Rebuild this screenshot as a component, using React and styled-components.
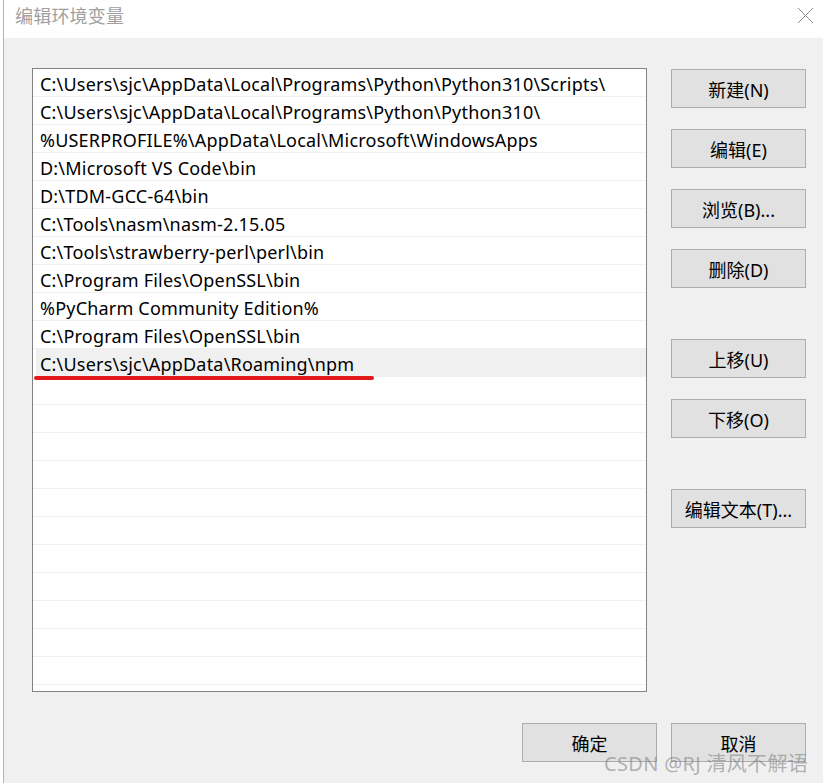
import React from "react";
import styled, { createGlobalStyle } from "styled-components";

const GlobalStyle = createGlobalStyle`
  html, body {
    margin: 0;
    padding: 0;
    background: #ffffff;
  }
  body {
    font-family: "Noto Sans", "Noto Sans CJK SC", sans-serif;
  }
`;

const Window = styled.div`
  position: relative;
  width: 820px;
  height: 783px;
  margin-left: 3px;
  border-left: 1px solid #b4b4b4;
  box-sizing: border-box;
  display: flex;
  flex-direction: column;
  overflow: hidden;
`;

const TitleBar = styled.div`
  height: 38px;
  background: #ffffff;
  display: flex;
  align-items: center;
  justify-content: space-between;
  padding: 0 9px 8px 11px;
  box-sizing: border-box;
`;

const Title = styled.div`
  font-family: "Noto Sans CJK SC", sans-serif;
  font-size: 18px;
  color: #a0a0a0;
  letter-spacing: 0.2px;
`;

const CloseButton = styled.svg`
  width: 17px;
  height: 17px;
`;

const Body = styled.div`
  flex: 1;
  background: #f0f0f0;
  display: grid;
  grid-template-columns: 615px 135px;
  grid-template-rows: 624px auto;
  column-gap: 24px;
  row-gap: 31px;
  padding: 30px 16px 0 28px;
  align-content: start;
`;

const List = styled.div`
  background: #ffffff;
  border: 1px solid #828282;
  overflow: hidden;
`;

const Row = styled.div`
  height: 28px;
  box-sizing: border-box;
  border-bottom: 1px solid #f0f0f0;
  margin-left: ${(p) => (p.$selected ? "3px" : "0")};
  padding-left: ${(p) => (p.$selected ? "4px" : "7px")};
  padding-top: 2px;
  background: ${(p) => (p.$selected ? "#f0f0f0" : "#ffffff")};
  font-size: 18px;
  letter-spacing: 0.2px;
  line-height: 27px;
  color: #000000;
  white-space: nowrap;
  position: relative;
  z-index: ${(p) => (p.$selected ? 2 : 1)};
`;

const RedMark = styled.span`
  position: absolute;
  left: -2px;
  top: 27px;
  width: 340px;
  height: 4px;
  border-radius: 2px;
  background: #e3191b;
`;

const ButtonColumn = styled.div`
  display: flex;
  flex-direction: column;
  padding-top: 1px;
`;

const Button = styled.div`
  width: 135px;
  height: 39px;
  box-sizing: border-box;
  margin-top: ${(p) => p.$gap || 0}px;
  background: #e1e1e1;
  border: 1px solid #adadad;
  display: flex;
  align-items: center;
  justify-content: center;
  font-family: "Noto Sans", "Noto Sans CJK SC", sans-serif;
  font-size: 18px;
  color: #000000;
`;

const Footer = styled.div`
  grid-column: 1 / 3;
  display: flex;
  justify-content: flex-end;
  gap: 14px;
`;

const Watermark = styled.div`
  position: absolute;
  right: 15px;
  bottom: 6px;
  font-family: "Noto Sans", "Noto Sans CJK SC", sans-serif;
  font-size: 20px;
  color: rgba(120, 120, 120, 0.55);
  letter-spacing: 0.3px;
  white-space: nowrap;
`;

const paths = [
  "C:\\Users\\sjc\\AppData\\Local\\Programs\\Python\\Python310\\Scripts\\",
  "C:\\Users\\sjc\\AppData\\Local\\Programs\\Python\\Python310\\",
  "%USERPROFILE%\\AppData\\Local\\Microsoft\\WindowsApps",
  "D:\\Microsoft VS Code\\bin",
  "D:\\TDM-GCC-64\\bin",
  "C:\\Tools\\nasm\\nasm-2.15.05",
  "C:\\Tools\\strawberry-perl\\perl\\bin",
  "C:\\Program Files\\OpenSSL\\bin",
  "%PyCharm Community Edition%",
  "C:\\Program Files\\OpenSSL\\bin",
  "C:\\Users\\sjc\\AppData\\Roaming\\npm",
];

const buttons = [
  { label: "新建(N)", gap: 0 },
  { label: "编辑(E)", gap: 21 },
  { label: "浏览(B)...", gap: 21 },
  { label: "删除(D)", gap: 21 },
  { label: "上移(U)", gap: 51 },
  { label: "下移(O)", gap: 21 },
  { label: "编辑文本(T)...", gap: 51 },
];

const App = () => {
  const rows = [...paths, ...Array(12).fill("")];

  return (
    <>
      <GlobalStyle />
      <Window>
        <TitleBar>
          <Title>编辑环境变量</Title>
          <CloseButton viewBox="0 0 17 17">
            <path d="M1 1 L16 16 M16 1 L1 16" stroke="#8a8a8a" strokeWidth="1" fill="none" />
          </CloseButton>
        </TitleBar>
        <Body>
          <List>
            {rows.map((text, i) => (
              <Row key={i} $selected={i === 10}>
                {text}
                {i === 10 && <RedMark />}
              </Row>
            ))}
          </List>
          <ButtonColumn>
            {buttons.map((b) => (
              <Button key={b.label} $gap={b.gap}>
                {b.label}
              </Button>
            ))}
          </ButtonColumn>
          <Footer>
            <Button>确定</Button>
            <Button>取消</Button>
          </Footer>
        </Body>
        <Watermark>CSDN @RJ 清风不解语</Watermark>
      </Window>
    </>
  );
};

export default App;
